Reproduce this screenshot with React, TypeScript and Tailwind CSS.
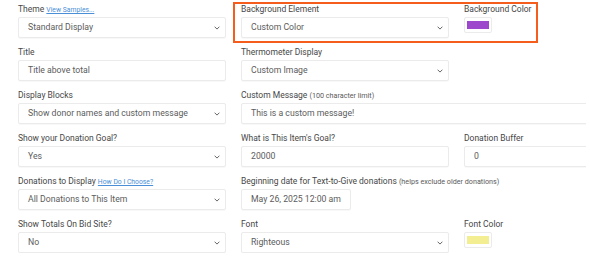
import type { ReactNode } from 'react';

function Chevron() {
  return (
    <svg width="6" height="4" viewBox="0 0 6 4" className="shrink-0">
      <path d="M0.6 0.7 L3 3.1 L5.4 0.7" fill="none" stroke="#666" strokeWidth="1" />
    </svg>
  );
}

function Label({ children }: { children: ReactNode }) {
  return <div className="h-[14px] whitespace-nowrap text-[8.5px] leading-[14px] text-[#474747]">{children}</div>;
}

function Hint({ children }: { children: ReactNode }) {
  return <span className="text-[7.2px] text-[#5a5a5a]">{children}</span>;
}

function HelpLink({ children }: { children: ReactNode }) {
  return <span className="text-[6.8px] text-[#4b8fd6] underline">{children}</span>;
}

function Box({ children, select, className = '' }: { children: ReactNode; select?: boolean; className?: string }) {
  return (
    <div
      className={`mt-[1px] flex h-[21px] items-center justify-between rounded-[2px] border border-[#ebebeb] bg-white pl-[9px] pr-[5px] text-[8.7px] text-[#5c5c5c] shadow-[0_1px_1px_rgba(0,0,0,0.03)] ${className}`}
    >
      <span className="whitespace-nowrap">{children}</span>
      {select && <Chevron />}
    </div>
  );
}

function Swatch({ color }: { color: string }) {
  return (
    <div className="mt-[1px] flex h-[16px] w-[28px] items-center justify-center rounded-[2px] border border-[#ebebeb] bg-white">
      <div className="h-[8px] w-[22px]" style={{ backgroundColor: color }} />
    </div>
  );
}

export default function App() {
  return (
    <div className="relative h-[263px] w-[590px] overflow-hidden bg-white" style={{ fontFamily: 'Roboto, "Liberation Sans", sans-serif' }}>
      <div className="w-[586px] overflow-hidden pt-[2px]">
        <div className="grid grid-cols-[208px_208px_208px] gap-x-[15px] gap-y-[7px] pl-[18px]">
          <div>
            <Label>
              Theme <HelpLink>View Samples...</HelpLink>
            </Label>
            <Box select>Standard Display</Box>
          </div>
          <div>
            <Label>Background Element</Label>
            <Box select>Custom Color</Box>
          </div>
          <div>
            <Label>Background Color</Label>
            <Swatch color="#9d47cc" />
          </div>

          <div>
            <Label>Title</Label>
            <Box>Title above total</Box>
          </div>
          <div>
            <Label>Thermometer Display</Label>
            <Box select>Custom Image</Box>
          </div>
          <div />

          <div>
            <Label>Display Blocks</Label>
            <Box select>Show donor names and custom message</Box>
          </div>
          <div className="col-span-2">
            <Label>
              Custom Message <Hint>(100 character limit)</Hint>
            </Label>
            <Box>This is a custom message!</Box>
          </div>

          <div>
            <Label>Show your Donation Goal?</Label>
            <Box select>Yes</Box>
          </div>
          <div>
            <Label>What is This Item's Goal?</Label>
            <Box>20000</Box>
          </div>
          <div>
            <Label>Donation Buffer</Label>
            <Box>0</Box>
          </div>

          <div>
            <Label>
              Donations to Display <HelpLink>How Do I Choose?</HelpLink>
            </Label>
            <Box select>All Donations to This Item</Box>
          </div>
          <div className="col-span-2">
            <Label>
              Beginning date for Text-to-Give donations <Hint>(helps exclude older donations)</Hint>
            </Label>
            <Box className="w-[110px]">May 26, 2025 12:00 am</Box>
          </div>

          <div>
            <Label>Show Totals On Bid Site?</Label>
            <Box select>No</Box>
          </div>
          <div>
            <Label>Font</Label>
            <Box select>Righteous</Box>
          </div>
          <div>
            <Label>Font Color</Label>
            <Swatch color="#f3ee92" />
          </div>
        </div>
      </div>
      <div className="pointer-events-none absolute left-[233px] top-[2px] h-[41px] w-[305px] border-2 border-[#f45d1c]" />
    </div>
  );
}
